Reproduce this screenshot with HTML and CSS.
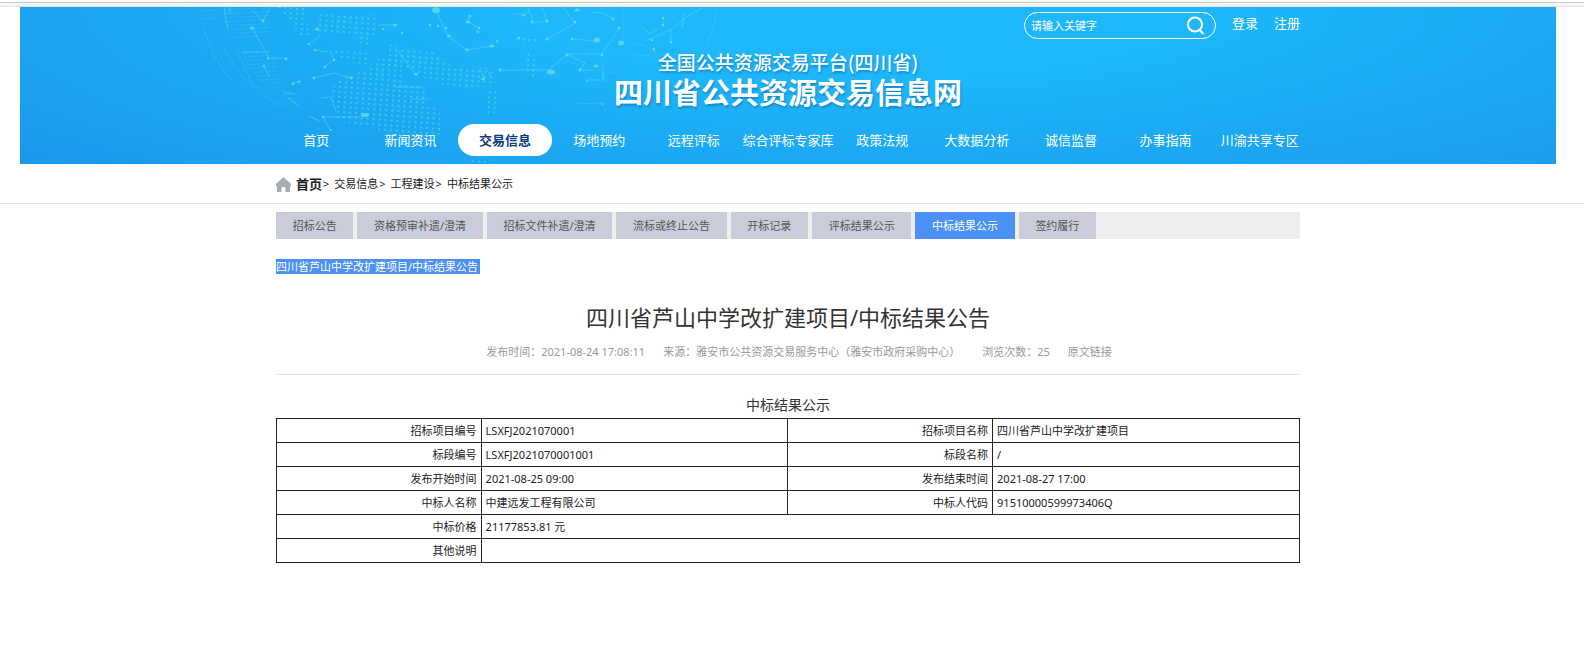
FILE: index.html
```html
<!DOCTYPE html>
<html lang="zh-CN">
<head>
<meta charset="utf-8">
<meta name="viewport" content="width=device-width, initial-scale=1">
<title>四川省公共资源交易信息网</title>
<link rel="stylesheet" href="styles.css">
</head>
<body>
<div class="window-edge"></div>
<div class="page">
  <header class="banner">
    <svg class="globe" viewBox="190 7 540 157" aria-hidden="true">
      <defs>
        <pattern id="dots" width="6" height="5" patternUnits="userSpaceOnUse" patternTransform="rotate(4)"><rect x="2" y="2" width="2" height="1.6" fill="#52dfe2" opacity=".7"/></pattern>
        <pattern id="fine" width="3" height="4" patternUnits="userSpaceOnUse" patternTransform="rotate(-3)"><rect x="1" y="1" width="1.4" height="1" fill="#5fdcf0" opacity=".35"/></pattern>
      </defs>
      <g fill="url(#dots)">
        <path d="M276 7h30l3 28h-10l-8-13zM317 14h58v22l-8 10-10-4-1-7-38-2z"/>
        <path d="M333 50l38 3v13l-30-6zM386 44l44 6 26 18 36 0 4 18-30 2-36-6-20-14-24-3z"/>
        <path d="M362 72l18-14 20 2 2 22 24 6v16l14 6v26l-44-2-62-15-2-30 10-14z"/>
        <path d="M485 88l12 2-2 24-12-2 4-12zM516 36h24v8h-24zM526 50l12 8-2 20-8-2z"/>
        <path d="M475 157l15 0-5 6-16 0z"/>
      </g>
      <g fill="url(#fine)">
        <path d="M198 8h18v14l-16-3zM222 8h49l-3 27-32 6-12-18zM240 48l36 4 2 23-30-7zM252 69l22 4 24 28-10-3-30-19zM204 30l26 38-6-3-14-23z"/>
        <path d="M284 90l20 18-7 0-16-12z"/>
      </g>
      <g fill="none" stroke="#62d9f2" stroke-width="1" opacity=".5">
        <path d="M224 8l4 22M252 10l11 11 7-14M230 14v-7M252 28l17 30h17M241 52h28M264 66l6 12M293 83l8-2M309 44l11-9M315 50l13 2M330 51l4 9-10 7M314 78l20-5 17 5M321 98l10-1 5 14M323 117l7 13M324 117h36M284 92l11 2M288 98l11 8M309 116l11 5"/>
        <path d="M378 25h17M398 51l17 23M394 87h28M410 99h20M436 10l12 26 19 14 25-4M470 15l-2 7 11 6M480 67l4 13M485 67l7 11M513 13l11 2 8-6M528 8l5 14h14l-5-14"/>
        <path d="M500 70h48l20-16 34 0 17-25M547 39l11-6 17-10-14-18M572 39l25 2M592 12l11 1 10 6M568 55l17 8-5 7h13M585 63l-5 7M587 80h16l0-18M598 70q6-3 6 12"/>
        <path d="M641 26l9 8 7-5M646 41l26-12 16-13 14-8M663 17v9M684 13l-2 15M671 29v15"/>
      </g>
      <g fill="none" stroke="#62d9f2" stroke-width="1" opacity=".25">
        <path d="M204 29q9 32 28 51M223 45q17 39 60 62M237 51l16 34 10 4M575 103l28 1M627 45l13-1 11 4 7 6 13 2M632 54l16 2 7-8M717 7q-3 26-14 45M623 7v35M606 72h12M654 50q11 17 16 36"/>
      </g>
      <g fill="#68dfdf" opacity=".75">
        <ellipse cx="436" cy="10" rx="4" ry="3"/><ellipse cx="252" cy="28" rx="2" ry="1.5"/><ellipse cx="317" cy="29" rx="2" ry="1.5"/><ellipse cx="365" cy="115" rx="4" ry="2"/><ellipse cx="395" cy="25" rx="2" ry="1.5"/><ellipse cx="449" cy="36" rx="2" ry="1.5"/><ellipse cx="468" cy="22" rx="2.5" ry="1.5"/><ellipse cx="492" cy="46" rx="2.5" ry="1.5"/><ellipse cx="416" cy="74" rx="2" ry="1.5"/><ellipse cx="483" cy="79" rx="2" ry="1.5"/><ellipse cx="551" cy="72" rx="4" ry="2.5"/><ellipse cx="597" cy="40" rx="3" ry="2.5"/><ellipse cx="621" cy="43" rx="3" ry="2.5"/><ellipse cx="577" cy="10" rx="2.5" ry="1.5"/><ellipse cx="596" cy="66" rx="2.5" ry="1.5"/>
        <circle cx="263" cy="21" r="1.5"/><circle cx="268" cy="58" r="1.2"/><circle cx="286" cy="59" r="1.4"/><circle cx="264" cy="66" r="1.2"/><circle cx="309" cy="44" r="1.3"/><circle cx="315" cy="50" r="1.3"/><circle cx="334" cy="60" r="1.3"/><circle cx="325" cy="67" r="1.3"/><circle cx="314" cy="78" r="1.4"/><circle cx="351" cy="78" r="1.4"/><circle cx="299" cy="82" r="1.4"/><circle cx="293" cy="84" r="1.4"/><circle cx="323" cy="117" r="1.2"/><circle cx="331" cy="130" r="1"/><circle cx="467" cy="50" r="1.6"/><circle cx="470" cy="16" r="1.5"/><circle cx="479" cy="28" r="1.4"/><circle cx="500" cy="70" r="1.4"/><circle cx="524" cy="15" r="1.6"/><circle cx="532" cy="22" r="1.6"/><circle cx="547" cy="21" r="1.6"/><circle cx="547" cy="39" r="1.6"/><circle cx="575" cy="22" r="1.5"/><circle cx="572" cy="39" r="1.4"/><circle cx="613" cy="19" r="1.5"/><circle cx="619" cy="28" r="1.5"/><circle cx="567" cy="55" r="1.4"/><circle cx="602" cy="55" r="1.2"/><circle cx="580" cy="70" r="1.4"/><circle cx="663" cy="18" r="1.2"/><circle cx="663" cy="25" r="1.2"/><circle cx="652" cy="40" r="1.3"/><circle cx="654" cy="49" r="1.3"/><circle cx="671" cy="42" r="1.2"/><circle cx="603" cy="104" r="1"/><circle cx="587" cy="81" r="1"/>
        <circle cx="430" cy="25" r="1.3"/><circle cx="438" cy="26" r="1.3"/><circle cx="446" cy="28" r="1.3"/><circle cx="478" cy="32" r="1.3"/><circle cx="497" cy="41" r="1.2"/><circle cx="383" cy="29" r="1.2"/><circle cx="402" cy="33" r="1.2"/><circle cx="519" cy="38" r="1.3"/>
      </g>
    </svg>
    <div class="banner-inner">
      <div class="tools">
        <form class="search">
          <input class="search-box" type="text" aria-label="关键字" placeholder="请输入关键字">
          <button class="search-button" type="button" aria-label="搜索">
            <svg class="search-icon" viewBox="0 0 18 19" aria-hidden="true"><circle cx="8" cy="8.500" r="7" /><path d="M12.500 14l4 4"/></svg>
          </button>
        </form>
        <a class="account" href="#">登录</a>
        <a class="account" href="#">注册</a>
      </div>
      <div class="brand">
        <p class="brand-platform">全国公共资源交易平台(四川省)</p>
        <p class="brand-name">四川省公共资源交易信息网</p>
      </div>
    </div>
    <nav class="nav">
      <a class="nav-item" href="#">首页</a>
      <a class="nav-item" href="#">新闻资讯</a>
      <a class="nav-item nav-current" href="#">交易信息</a>
      <a class="nav-item" href="#">场地预约</a>
      <a class="nav-item" href="#">远程评标</a>
      <a class="nav-item" href="#">综合评标专家库</a>
      <a class="nav-item" href="#">政策法规</a>
      <a class="nav-item" href="#">大数据分析</a>
      <a class="nav-item" href="#">诚信监督</a>
      <a class="nav-item" href="#">办事指南</a>
      <a class="nav-item" href="#">川渝共享专区</a>
    </nav>
  </header>
</div>
<div class="crumb-bar">
  <nav class="crumbs" aria-label="位置">
    <svg class="home-icon" viewBox="0 0 15 15" aria-hidden="true"><path d="M7.500 0L15 7V9h-1v6H9.500v-4a1 1 0 0 0-1-1h-2a1 1 0 0 0-1 1v4H1V9H0V7z"/></svg>
    <a class="crumb-home" href="#">首页</a><span class="crumb-mark">&gt;</span>
    <a class="crumb" href="#">交易信息</a><span class="crumb-mark">&gt;</span>
    <a class="crumb" href="#">工程建设</a><span class="crumb-mark">&gt;</span>
    <a class="crumb" href="#">中标结果公示</a>
  </nav>
</div>
<main class="page">
  <div class="content">
    <div class="tab-bar">
      <div class="tabs">
        <button class="tab" type="button">招标公告</button>
        <button class="tab" type="button">资格预审补遗/澄清</button>
        <button class="tab" type="button">招标文件补遗/澄清</button>
        <button class="tab" type="button">流标或终止公告</button>
        <button class="tab" type="button">开标记录</button>
        <button class="tab" type="button">评标结果公示</button>
        <button class="tab tab-current" type="button">中标结果公示</button>
        <button class="tab" type="button">签约履行</button>
      </div>
    </div>
    <p class="related"><a class="related-link" href="#">四川省芦山中学改扩建项目/中标结果公告</a></p>
    <h1 class="title">四川省芦山中学改扩建项目/中标结果公告</h1>
    <div class="meta">
      <span class="meta-time">发布时间：2021-08-24 17:08:11</span>
      <span class="meta-source">来源：雅安市公共资源交易服务中心（雅安市政府采购中心）</span>
      <span class="meta-views">浏览次数：25</span>
      <a class="meta-link" href="#">原文链接</a>
    </div>
    <table class="result">
      <caption class="result-caption">中标结果公示</caption>
      <colgroup><col class="col-label"><col class="col-value"><col class="col-label"><col class="col-value"></colgroup>
      <tbody>
        <tr><th scope="row">招标项目编号</th><td>LSXFJ2021070001</td><th scope="row">招标项目名称</th><td>四川省芦山中学改扩建项目</td></tr>
        <tr><th scope="row">标段编号</th><td>LSXFJ2021070001001</td><th scope="row">标段名称</th><td>/</td></tr>
        <tr><th scope="row">发布开始时间</th><td>2021-08-25 09:00</td><th scope="row">发布结束时间</th><td>2021-08-27 17:00</td></tr>
        <tr><th scope="row">中标人名称</th><td>中建远发工程有限公司</td><th scope="row">中标人代码</th><td>91510000599973406Q</td></tr>
        <tr><th scope="row">中标价格</th><td colspan="3">21177853.81 元</td></tr>
        <tr><th scope="row">其他说明</th><td colspan="3"></td></tr>
      </tbody>
    </table>
  </div>
</main>
</body>
</html>
```
FILE: styles.css
```css
* { box-sizing: border-box; }
body {
  margin: 0;
  background: #fff;
  color: #222;
  font: 11px/16px "Noto Sans", "Noto Sans CJK SC", sans-serif;
}
a { color: inherit; text-decoration: none; }
p, h1 { margin: 0; }
button, input { font: inherit; border: 0; padding: 0; border-radius: 0; }

.window-edge {
  height: 7px;
  border-top: 2px solid #fff;
  border-bottom: 1px solid #e4e4e4;
  background: #f6f6f6;
  box-shadow: inset 0 1px #c9c9c9;
}
.page { padding: 0 28px 0 20px; }

/* Banner */
.banner {
  position: relative;
  padding: 5px 0 8px;
  overflow: hidden;
  color: #fff;
  background: radial-gradient(ellipse 90% 190% at 55% 0, #1db7fa 25%, #1a92e9 92%);
}
.globe { position: absolute; left: 170px; top: 0; width: 540px; height: 157px; }
.banner-inner, .nav { position: relative; margin: 0 auto; }
.banner-inner { max-width: 1024px; }
.tools { display: flex; justify-content: flex-end; gap: 16px; }
.search {
  display: flex;
  align-items: center;
  width: 192px;
  height: 27px;
  padding: 0 10px 0 6px;
  border: 1px solid #fff;
  border-radius: 14px;
}
.search-box { flex: 1; min-width: 0; background: transparent; color: #fff; outline: 0; }
.search-box::placeholder { color: #fff; opacity: 1; }
.search-button { display: flex; background: transparent; cursor: pointer; }
.search-icon { width: 18px; height: 19px; fill: none; stroke: #fff; stroke-width: 2; }
.account { font-size: 13px; line-height: 23px; }
.brand { padding: 11px 0 16px; text-align: center; text-shadow: 1px 2px 2px #1788cc; }
.brand-platform { font: 500 19px/24px "Noto Sans CJK SC", sans-serif; }
.brand-name { font: bold 29px/34px "Noto Sans CJK SC", sans-serif; }
.nav { display: grid; grid-template-columns: repeat(11, 1fr); max-width: 1038px; }
.nav-item { font-size: 13px; line-height: 32px; text-align: center; white-space: nowrap; }
.nav-current { border-radius: 16px; background: #fff; color: #0b3c85; font-weight: bold; }

/* Breadcrumb */
.crumb-bar { padding: 0 28px 0 20px; border-bottom: 1px solid #e4e4e4; }
.crumbs { display: flex; align-items: center; max-width: 1024px; height: 39px; margin: 0 auto; padding-top: 1px; color: #222; }
.home-icon { width: 15px; height: 15px; margin-right: 5px; fill: #a8abb2; }
.crumb-home { font-size: 13px; font-weight: 700; }
.crumb-mark { margin: 0 5px 0 1px; }

/* Tabs */
.content { max-width: 1024px; margin: 0 auto; padding-top: 8px; }
.tab-bar { background: #eee; }
.tabs { display: flex; gap: 4px; max-width: 820px; }
.tab {
  flex: 1 0 auto;
  height: 27px;
  padding: 0 15px;
  background: #cacdd9;
  color: #555;
  white-space: nowrap;
  cursor: pointer;
}
.tab-current { background: #4c91f6; color: #fff; }

/* Article */
.related { margin-top: 20px; line-height: 15px; }
.related-link { display: inline-block; padding-right: 2px; background: #4c91f6; color: #fff; }
.title { margin-top: 27px; font-size: 22px; font-weight: 400; line-height: 32px; text-align: center; color: #333; }
.meta {
  display: flex;
  justify-content: center;
  gap: 18px;
  margin-top: 11px;
  padding: 0 0 14px 22px;
  border-bottom: 1px solid #e4e4e4;
  color: #999;
}
.meta-views { margin-left: 4px; }

.result { width: 100%; margin-top: 20px; border-collapse: collapse; table-layout: fixed; }
.result-caption { padding-bottom: 3px; font-size: 14px; line-height: 20px; color: #333; }
.col-label { width: 20%; }
.col-value { width: 30%; }
.result th, .result td { height: 24px; padding: 1px 4px 0; border: 1px solid #222; font-weight: 400; text-align: left; }
.result th { text-align: right; }
```
